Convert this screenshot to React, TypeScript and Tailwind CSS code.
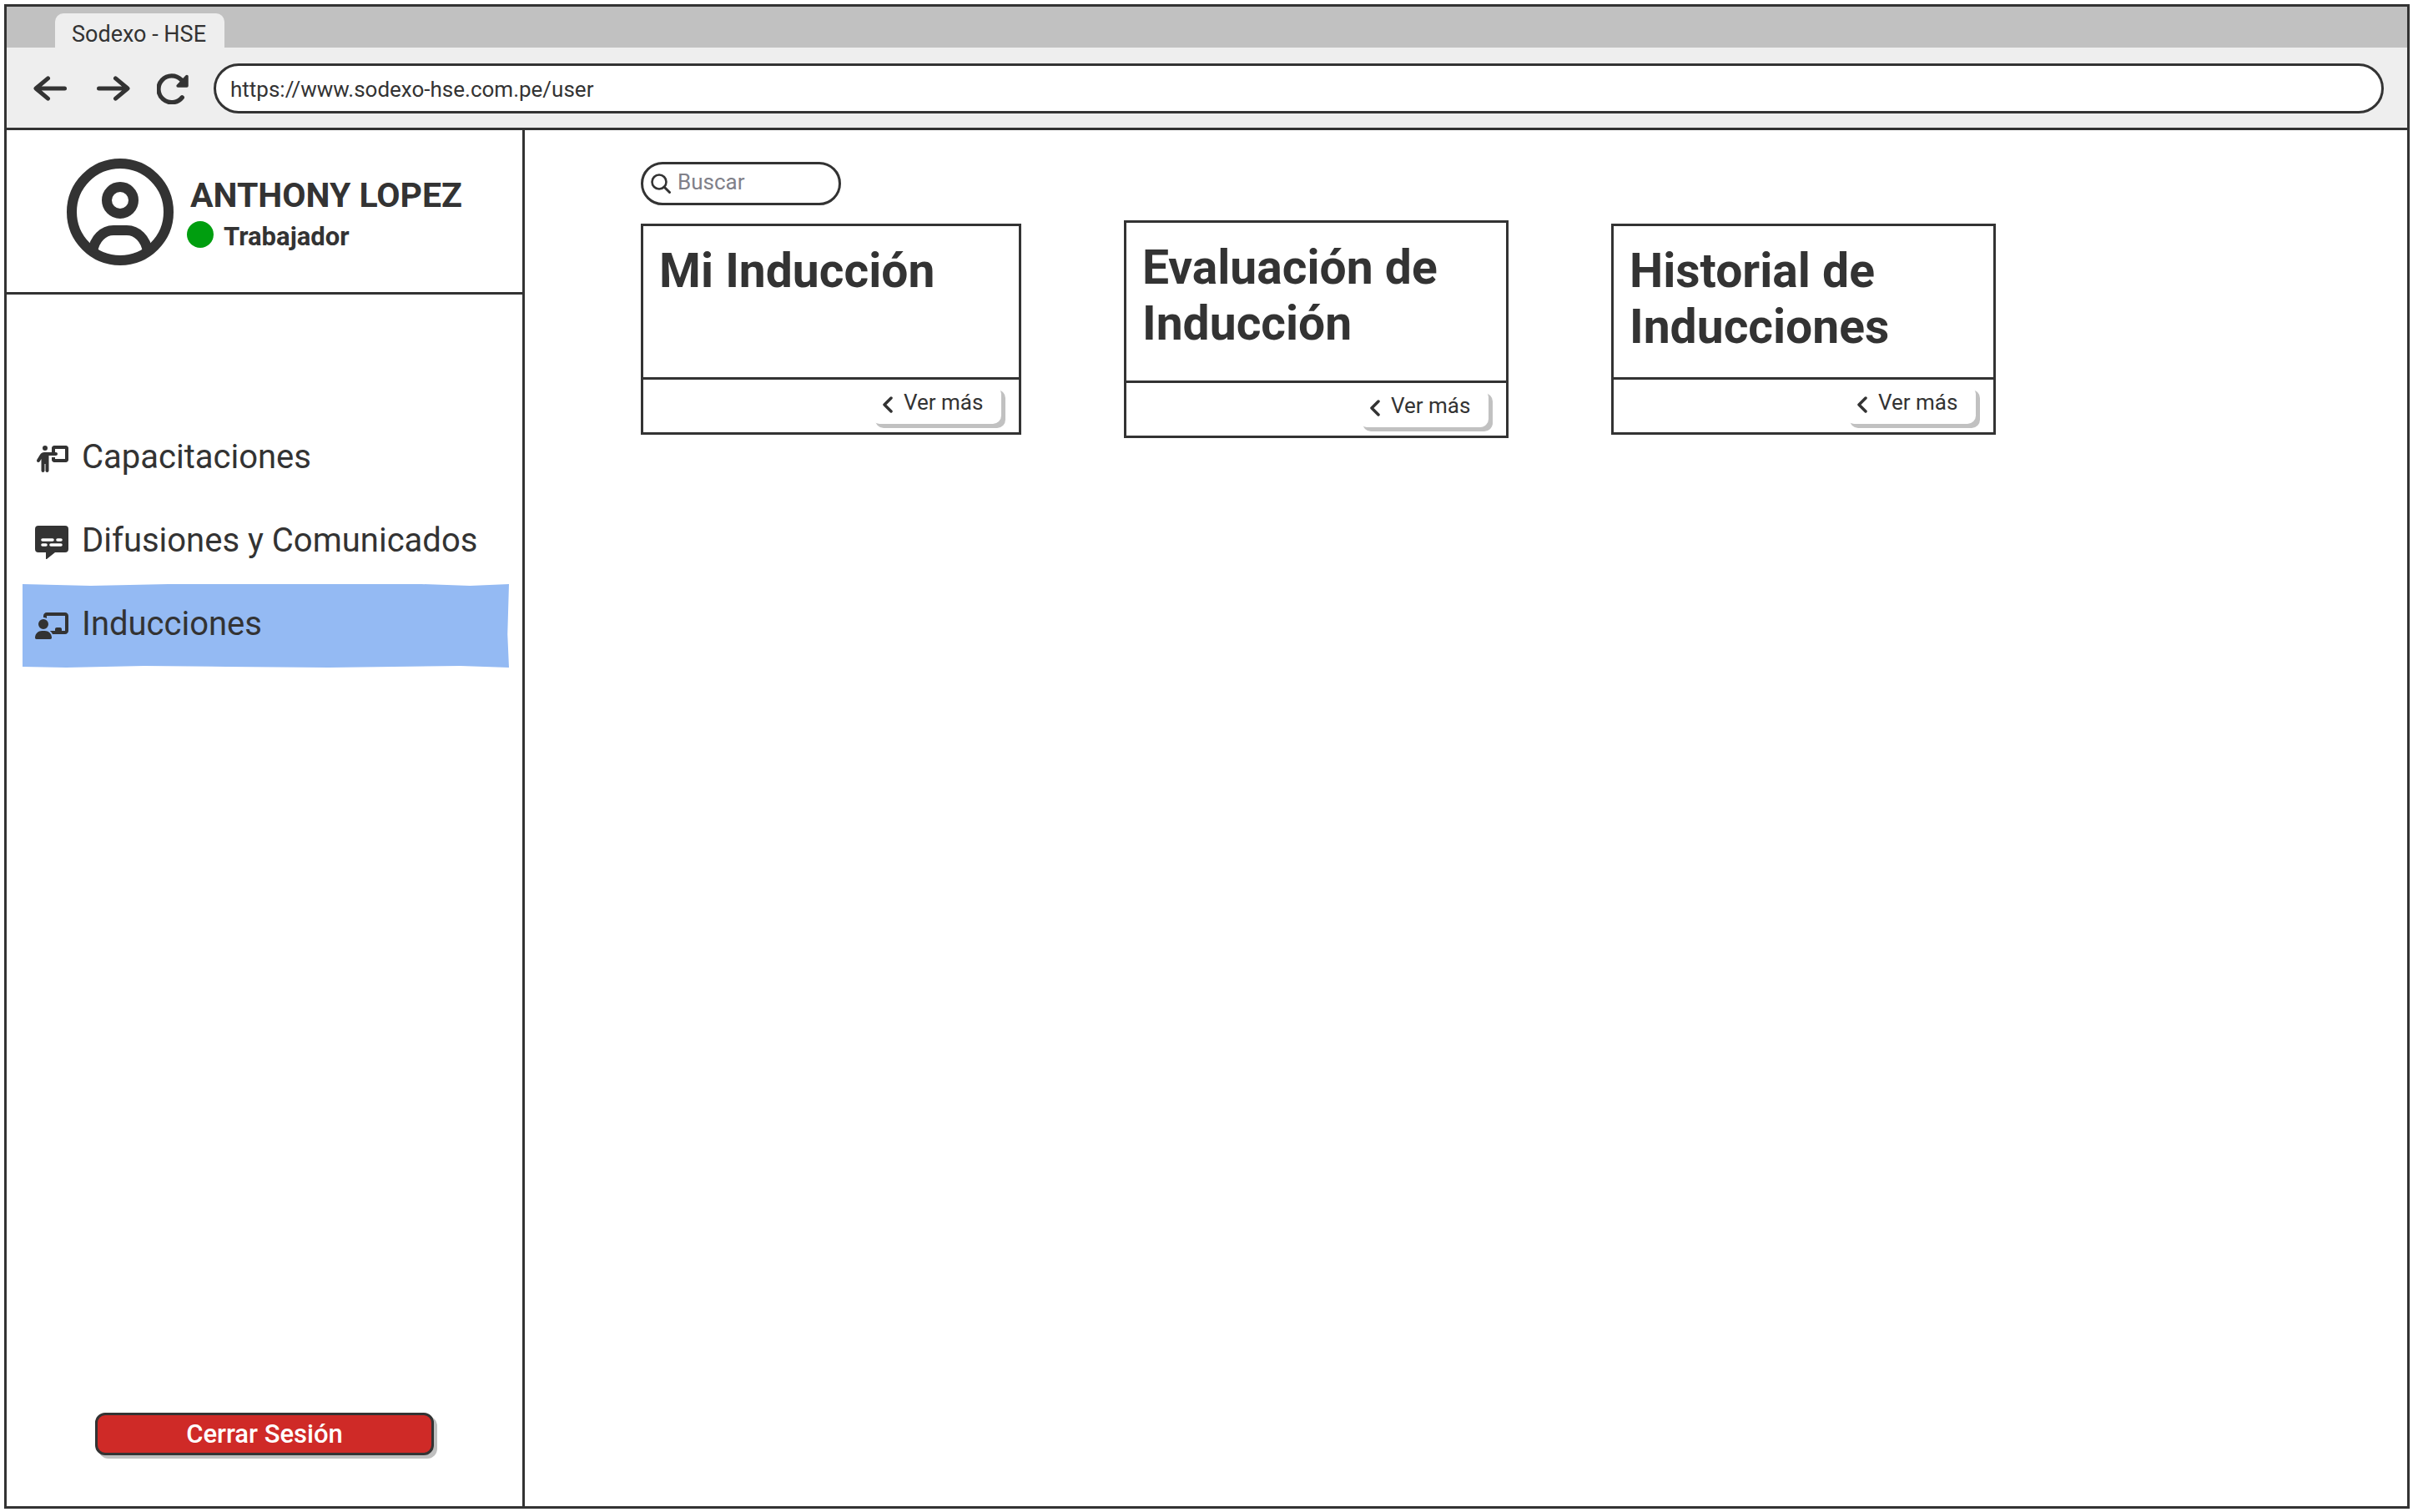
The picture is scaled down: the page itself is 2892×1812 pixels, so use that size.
import React from "react";
import { FaChalkboardUser, FaPersonChalkboard } from "react-icons/fa6";

type IconProps = { className?: string };

function ArrowIcon({ className }: IconProps) {
  return (
    <svg viewBox="0 0 40 32" className={className} fill="none" stroke="currentColor" strokeWidth="5" strokeLinecap="round" strokeLinejoin="round" aria-hidden="true">
      <path d="M37.500 16H6" />
      <path d="M17.500 3.500L3 16l14.500 12.500L8 16z" fill="currentColor" strokeWidth="0" />
      <path d="M17.500 3.800L3 16l14.500 12.200" />
    </svg>
  );
}

function ReloadIcon({ className }: IconProps) {
  return (
    <svg viewBox="0 0 37 36" className={className} aria-hidden="true">
      <path d="M29.500 28A15.500 15.500 0 1 1 28.500 7.500" fill="none" stroke="currentColor" strokeWidth="5.200" strokeLinecap="round" />
      <path d="M35 3.500V14.500H24.500z" fill="currentColor" stroke="currentColor" strokeWidth="3.500" strokeLinejoin="round" />
    </svg>
  );
}

function AvatarIcon({ className }: IconProps) {
  return (
    <svg viewBox="0 0 128 128" className={className} fill="none" stroke="currentColor" strokeWidth="12" role="img" aria-label="Usuario">
      <circle cx="64" cy="64" r="58" />
      <circle cx="64" cy="50" r="16" />
      <path d="M31 112C33 96 44 86 56 86H72C84 86 95 96 97 112" />
    </svg>
  );
}

function CaptionsIcon({ className }: IconProps) {
  return (
    <svg viewBox="0 0 40 40" className={className} aria-hidden="true">
      <path d="M4 0h32a4 4 0 0 1 4 4v24a4 4 0 0 1-4 4H24l-10 8h-1v-8H4a4 4 0 0 1-4-4V4a4 4 0 0 1 4-4z" fill="currentColor" />
      <path d="M9 17h12M27 17h4M9 23h4M19 23h12" stroke="#fff" strokeWidth="3.600" strokeLinecap="round" />
    </svg>
  );
}

function SearchIcon({ className }: IconProps) {
  return (
    <svg viewBox="0 0 24 24" className={className} fill="none" stroke="currentColor" strokeLinecap="round" aria-hidden="true">
      <circle cx="10" cy="10" r="8.500" strokeWidth="2.600" />
      <path d="M16 16l6.500 6.500" strokeWidth="3" />
    </svg>
  );
}

function ChevronIcon({ className }: IconProps) {
  return (
    <svg viewBox="0 0 14 20" className={className} fill="none" stroke="currentColor" strokeWidth="3.500" strokeLinecap="round" strokeLinejoin="round" aria-hidden="true">
      <path d="M11 2L3 10l8 8" />
    </svg>
  );
}

const navItems = [
  { label: "Capacitaciones", Icon: FaPersonChalkboard, active: false },
  { label: "Difusiones y Comunicados", Icon: CaptionsIcon, active: false },
  { label: "Inducciones", Icon: FaChalkboardUser, active: true },
];

const cards = [
  { title: "Mi Inducción", width: "w-[456px]", body: "min-h-[184px]" },
  { title: "Evaluación de Inducción", width: "w-[461px]", body: "min-h-[192px]" },
  { title: "Historial de Inducciones", width: "w-[461px]", body: "min-h-[184px]" },
];

function BrowserBar() {
  return (
    <header>
      <div className="flex h-[49px] items-end bg-[#c1c1c1]">
        <div className="ml-[58px] flex h-[41px] items-center rounded-t-[10px] bg-[#eeeeee] pl-5 pr-[22px] pt-2 text-[27px] leading-8">
          Sodexo - HSE
        </div>
      </div>
      <div className="flex items-center border-b-[3px] border-[#333333] bg-[#eeeeee] pb-[17px] pl-8 pr-7 pt-[19px]">
        <button type="button" aria-label="Atrás" className="mr-9">
          <ArrowIcon className="h-8 w-10" />
        </button>
        <button type="button" aria-label="Adelante" className="mr-8">
          <ArrowIcon className="h-8 w-10 rotate-180" />
        </button>
        <button type="button" aria-label="Recargar" className="mr-[30px]">
          <ReloadIcon className="h-[37px] w-[38px]" />
        </button>
        <input
          type="text"
          aria-label="Dirección"
          defaultValue="https://www.sodexo-hse.com.pe/user"
          className="h-[60px] min-w-0 flex-1 rounded-full border-[3px] border-[#333333] bg-white px-[17px] pt-0.5 text-[26px] outline-none"
        />
      </div>
    </header>
  );
}

function Sidebar() {
  return (
    <aside className="flex w-[621px] shrink-0 flex-col border-r-[3px] border-[#333333]">
      <div className="flex h-[197px] items-start gap-4 border-b-[3px] border-[#333333] pl-[72px] pt-[34px]">
        <AvatarIcon className="h-32 w-32 shrink-0" />
        <div className="mt-5 flex flex-col gap-1.5">
          <p className="ml-1 text-[41px] font-bold leading-[48px]">ANTHONY LOPEZ</p>
          <p className="flex items-center gap-3 text-[31px] font-bold leading-10">
            <span className="mb-1.5 h-8 w-8 rounded-full bg-[#009e0f]" />
            Trabajador
          </p>
        </div>
      </div>
      <nav className="ml-[19px] mr-4 mt-[147px]">
        {navItems.map(({ label, Icon, active }) => (
          <a
            key={label}
            href="#"
            aria-current={active ? "page" : undefined}
            className={
              "flex h-[100px] items-center gap-4 pl-[15px] text-[40px] leading-[48px] " +
              (active
                ? "bg-[#94baf3] [clip-path:polygon(0_0,14%_2%,30%_0,60%_0,82%_0,92%_2%,100%_0,99.700%_60%,100%_100%,90%_98%,63%_100%,42%_99%,25%_98%,9%_100%,0_99%)]"
                : "")
            }
          >
            <Icon className="h-10 w-10 shrink-0" />
            <span className="pb-1">{label}</span>
          </a>
        ))}
      </nav>
      <button
        type="button"
        className="mx-[106px] mb-[61px] mt-auto h-[51px] rounded-xl border-[3px] border-[#333333] bg-[#cf2a27] text-[31px] font-medium leading-none text-white shadow-[4px_4px_0_#bfbfbf]"
      >
        Cerrar Sesión
      </button>
    </aside>
  );
}

function Card({ title, width, body }: { title: string; width: string; body: string }) {
  return (
    <article className={"flex flex-col border-[3px] border-[#333333] " + width}>
      <h2 className={"border-b-[3px] border-[#333333] pl-[19px] pr-4 pt-5 text-[57px] font-bold leading-[67px] " + body}>
        {title}
      </h2>
      <div className="flex h-[63px] items-start justify-end pr-[21px] pt-[7px]">
        <button
          type="button"
          className="flex h-[46px] w-[156px] items-center gap-3 rounded-[10px] bg-white pl-[13px] text-[26px] shadow-[5px_5px_0_#c1c1c1]"
        >
          <ChevronIcon className="h-5 w-3.5" />
          <span className="pb-1.5">Ver más</span>
        </button>
      </div>
    </article>
  );
}

export default function App() {
  return (
    <div className="flex min-h-screen flex-col bg-white pb-1 pl-[5px] pr-1 pt-[5px] font-[Roboto,sans-serif] text-[#333333]">
      <div className="flex flex-1 flex-col border-[3px] border-[#333333]">
        <BrowserBar />
        <div className="flex flex-1">
          <Sidebar />
          <main className="flex-1 pl-[139px] pt-[38px]">
            <label className="flex h-[52px] w-60 items-center gap-2 rounded-full border-[3px] border-[#333333] pl-[9px]">
              <SearchIcon className="h-6 w-6 shrink-0" />
              <input
                type="search"
                aria-label="Buscar"
                placeholder="Buscar"
                className="min-w-0 flex-1 bg-transparent pb-1 text-[26px] outline-none placeholder:text-[#808089]"
              />
            </label>
            <div className="mt-[18px] flex items-center gap-[123px]">
              {cards.map((card) => (
                <Card key={card.title} {...card} />
              ))}
            </div>
          </main>
        </div>
      </div>
    </div>
  );
}
